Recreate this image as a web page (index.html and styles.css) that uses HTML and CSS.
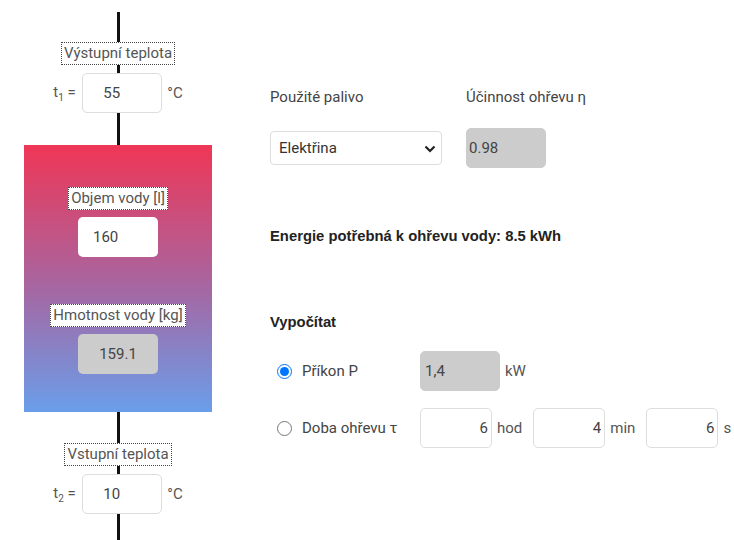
FILE: index.html
```html
<!DOCTYPE html>
<html lang="cs">
<head>
    <meta charset="UTF-8">
    <meta name="viewport" content="width=device-width, initial-scale=1.0">
    <title>Ohřev vody</title>
    <link rel="stylesheet" href="styles.css">
</head>
<body>
    <div class="page">
        <!-- schema of the boiler -->
        <div class="boiler">
            <span class="tag">Výstupní teplota</span>
            <div class="temp-row">
                <span class="sym">t<sub>1</sub> =</span>
                <input type="text" class="box box-temp" value="55">
                <span class="unit">°C</span>
            </div>

            <div class="tank">
                <span class="tag">Objem vody [l]</span>
                <input type="text" class="box box-volume" value="160">
                <span class="tag tag-mass">Hmotnost vody [kg]</span>
                <input type="text" class="box box-mass" value="159.1" readonly>
            </div>

            <span class="tag tag-in">Vstupní teplota</span>
            <div class="temp-row">
                <span class="sym">t<sub>2</sub> =</span>
                <input type="text" class="box box-temp" value="10">
                <span class="unit">°C</span>
            </div>
        </div>

        <div class="panel">
            <div class="fields">
                <div class="field">
                    <label for="fuel">Použité palivo</label>
                    <div class="control select-wrap">
                        <select id="fuel" class="select">
                            <option>Elektřina</option>
                            <option>Zemní plyn</option>
                            <option>Dřevo</option>
                        </select>
                        <svg class="chevron" width="12" height="8" viewBox="0 0 12 8">
                            <path d="M1.5 1.5 L6 6 L10.5 1.5" fill="none" stroke="#222" stroke-width="2.2"/>
                        </svg>
                    </div>
                </div>
                <div class="field">
                    <label for="eff">Účinnost ohřevu η</label>
                    <div class="control">
                        <input type="text" id="eff" class="box box-gray box-eff" value="0.98" readonly>
                    </div>
                </div>
            </div>

            <p class="energy">Energie potřebná k ohřevu vody: 8.5 kWh</p>

            <p class="calc-title">Vypočítat</p>

            <div class="calc-row">
                <input type="radio" name="calc" id="power" checked>
                <label for="power" class="calc-label">Příkon P</label>
                <input type="text" class="box box-gray box-power" value="1,4" readonly>
                <span class="unit">kW</span>
            </div>
            <div class="calc-row">
                <input type="radio" name="calc" id="time">
                <label for="time" class="calc-label">Doba ohřevu τ</label>
                <input type="text" class="box box-time" value="6">
                <span class="unit">hod</span>
                <input type="text" class="box box-time" value="4">
                <span class="unit">min</span>
                <input type="text" class="box box-time" value="6">
                <span class="unit">s</span>
            </div>
        </div>
    </div>
</body>
</html>
```

FILE: styles.css
```css
body {
    margin: 0;
    font-family: Roboto, "Liberation Sans", Arial, sans-serif;
    font-size: 15px;
    color: #444;
    background: #fff;
}
.page {
    display: flex;
}
.boiler {
    flex-shrink: 0;
    width: 236px;
    height: 498px;
    padding-top: 42px;
    display: flex;
    flex-direction: column;
    align-items: center;
    background: linear-gradient(#111, #111) 117px 12px / 3px 100% no-repeat;
}
.tag {
    border: 1px dotted #444;
    background: #fff;
    color: #555;
    line-height: 21px;
    padding: 0 2px;
}
.temp-row {
    display: flex;
    align-items: center;
    margin-top: 8px;
}
.sym {
    color: #555;
    width: 29px;
}
.sym sub {
    font-size: 10px;
}
.unit {
    color: #555;
    margin-left: 5px;
}
.box {
    box-sizing: border-box;
    height: 40px;
    width: 80px;
    border: 1px solid #ddd;
    border-radius: 5px;
    font-family: inherit;
    font-size: 15px;
    color: #444;
    background: #fff;
    padding: 0 3px;
    outline: none;
}
.box-temp {
    padding-left: 20px;
}
.tank {
    box-sizing: border-box;
    margin-top: 32px;
    width: 188px;
    height: 267px;
    padding-top: 42px;
    display: flex;
    flex-direction: column;
    align-items: center;
    background: linear-gradient(#ef3656, #a468a4 55%, #6a9eea);
}
.tank .box {
    margin-top: 7px;
    border: none;
}
.box-volume {
    padding-left: 15px;
}
.tag-mass {
    margin-top: 47px;
}
.tank .box-mass {
    background: #ccc;
    text-align: center;
}
.tag-in {
    margin-top: 31px;
}
.panel {
    padding-left: 34px;
    padding-top: 88px;
}
.fields {
    display: flex;
    gap: 24px;
}
.field {
    display: flex;
    flex-direction: column;
    gap: 22px;
}
.control {
    height: 40px;
    display: flex;
    align-items: center;
}
.select-wrap {
    position: relative;
}
.select {
    appearance: none;
    width: 172px;
    height: 34px;
    border: 1px solid #ddd;
    border-radius: 4px;
    background: #fff;
    font-family: inherit;
    font-size: 15px;
    color: #333;
    padding-left: 8px;
}
.chevron {
    position: absolute;
    right: 6px;
    top: 17px;
    pointer-events: none;
}
.box-gray {
    background: #ccc;
    border-color: #ccc;
    padding-left: 2px;
}
.energy,
.calc-title {
    font-family: "Liberation Sans", Arial, sans-serif;
    font-weight: bold;
    font-size: 14.8px;
    color: #222;
}
.energy {
    margin: 60px 0 0;
}
.calc-title {
    margin: 70px 0 0;
}
.calc-row {
    display: flex;
    align-items: center;
    margin-top: 21px;
}
.calc-row + .calc-row {
    margin-top: 17px;
}
.calc-row input[type="radio"] {
    width: 15px;
    height: 15px;
    margin: 0 10px 0 7px;
}
.calc-label {
    width: 118px;
}
.box-power {
    padding-left: 4px;
}
.box-time {
    width: 72px;
    text-align: right;
    padding-right: 3px;
}
.box-time + .unit {
    margin-right: 11px;
}
```
